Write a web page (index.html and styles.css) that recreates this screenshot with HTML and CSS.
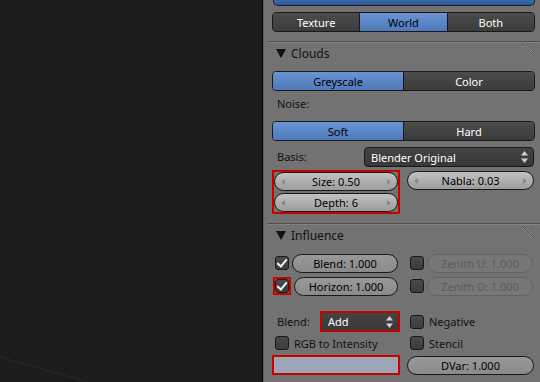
FILE: index.html
```html
<!DOCTYPE html>
<html>

<head>
    <title>Texture Properties</title>
    <link rel="stylesheet" href="styles.css">
</head>

<body>
    <div class="screen">
        <!-- 3D 视图区域 -->
        <div class="viewport">
            <svg viewBox="0 0 262 382" width="262" height="382">
                <line x1="0" y1="357" x2="92" y2="383" stroke="#2a2a2a" stroke-width="1" />
            </svg>
        </div>

        <!-- 属性面板 -->
        <div class="props">
            <div class="topbar"></div>

            <div class="seg mt6">
                <div class="tog">Texture</div>
                <div class="tog on">World</div>
                <div class="tog">Both</div>
            </div>

            <!-- Clouds -->
            <div class="sep mt9"></div>
            <div class="header">
                <svg class="tri" viewBox="0 0 10 9" width="10" height="9"><polygon points="0,0 10,0 5,9" fill="#111" /></svg>
                <span>Clouds</span>
                <svg class="hatch" viewBox="0 0 16 16" width="16" height="16">
                    <path d="M3 1 L15 13 M7 1 L15 9 M11 1 L15 5" stroke="#5a5a5a" stroke-width="1" />
                    <path d="M3 2 L14 13 M7 2 L14 9 M11 2 L14 5" stroke="#8a8a8a" stroke-width="1" />
                </svg>
            </div>

            <div class="seg mt7">
                <div class="tog on">Greyscale</div>
                <div class="tog">Color</div>
            </div>

            <div class="label mt3">Noise:</div>

            <div class="seg mt7">
                <div class="tog on">Soft</div>
                <div class="tog">Hard</div>
            </div>

            <div class="basis mt6">
                <div class="basis-label">Basis:</div>
                <div class="menu">
                    <span>Blender Original</span>
                    <svg viewBox="0 0 7 12" width="7" height="12"><polygon points="3.5,0 7,4.5 0,4.5" fill="#d0d0d0" /><polygon points="0,7.5 7,7.5 3.5,12" fill="#d0d0d0" /></svg>
                </div>
            </div>

            <div class="cols mt3">
                <div class="boxed">
                    <div class="slider"><i class="al"></i><span>Size: 0.50</span><i class="ar"></i></div>
                    <div class="slider"><i class="al"></i><span>Depth: 6</span><i class="ar"></i></div>
                </div>
                <div>
                    <div class="slider right"><i class="al"></i><span>Nabla: 0.03</span><i class="ar"></i></div>
                </div>
            </div>

            <!-- Influence -->
            <div class="sep mt9"></div>
            <div class="header">
                <svg class="tri" viewBox="0 0 10 9" width="10" height="9"><polygon points="0,0 10,0 5,9" fill="#111" /></svg>
                <span>Influence</span>
                <svg class="hatch" viewBox="0 0 16 16" width="16" height="16">
                    <path d="M3 1 L15 13 M7 1 L15 9 M11 1 L15 5" stroke="#5a5a5a" stroke-width="1" />
                    <path d="M3 2 L14 13 M7 2 L14 9 M11 2 L14 5" stroke="#8a8a8a" stroke-width="1" />
                </svg>
            </div>

            <div class="cols mt7">
                <div class="chk-row">
                    <div class="chk on"></div>
                    <div class="slider plain">Blend: 1.000</div>
                </div>
                <div class="chk-row">
                    <div class="chk"></div>
                    <div class="slider off">Zenith U: 1.000</div>
                </div>
            </div>
            <div class="cols mt3">
                <div class="chk-row">
                    <div class="hl"><div class="chk on"></div></div>
                    <div class="slider plain">Horizon: 1.000</div>
                </div>
                <div class="chk-row">
                    <div class="chk"></div>
                    <div class="slider off">Zenith D: 1.000</div>
                </div>
            </div>

            <div class="cols mt15">
                <div class="blend-row">
                    <div class="blend-label">Blend:</div>
                    <div class="menu boxed-menu">
                        <span>Add</span>
                        <svg viewBox="0 0 7 12" width="7" height="12"><polygon points="3.5,0 7,4.5 0,4.5" fill="#d0d0d0" /><polygon points="0,7.5 7,7.5 3.5,12" fill="#d0d0d0" /></svg>
                    </div>
                </div>
                <div class="opt">
                    <div class="chk"></div>
                    <span>Negative</span>
                </div>
            </div>
            <div class="cols mt3">
                <div class="opt">
                    <div class="chk"></div>
                    <span>RGB to Intensity</span>
                </div>
                <div class="opt">
                    <div class="chk"></div>
                    <span>Stencil</span>
                </div>
            </div>

            <div class="cols mt4">
                <div class="swatch"></div>
                <div>
                    <div class="slider plain right dvar">DVar: 1.000</div>
                </div>
            </div>
        </div>
    </div>
</body>

</html>
```

FILE: styles.css
```css
body {
    margin: 0;
    font-family: "Noto Sans", "DejaVu Sans", sans-serif;
    font-size: 11px;
    background-color: #1c1c1c;
}

.screen {
    display: flex;
    width: 540px;
    height: 382px;
    overflow: hidden;
}

.viewport {
    width: 262px;
    flex: none;
    background-color: #1c1c1c;
    border-right: 1px solid #080808;
}

.viewport svg {
    display: block;
}

.props {
    flex: 1;
    background-color: #727272;
    border-left: 1px solid #5e5e5e;
    padding: 0 5px 0 8px;
}

.topbar {
    height: 5px;
    margin-left: 1px;
    background: linear-gradient(#3a68ab, #2b5795);
    border: 1px solid #1b1b1b;
    border-top: none;
    border-radius: 0 0 5px 5px;
}

/* 切换按钮组 */
.seg {
    display: flex;
    height: 20px;
    box-sizing: border-box;
    border: 1px solid #191919;
    border-radius: 4px;
    overflow: hidden;
}

.tog {
    flex: 1;
    display: flex;
    align-items: center;
    justify-content: center;
    color: #ffffff;
    background: linear-gradient(#4c4c4c, #3b3b3b);
}

.tog + .tog {
    border-left: 1px solid #191919;
}

.tog.on {
    color: #000000;
    background: linear-gradient(#6a94d4, #4e7aba);
}

/* 分割线和面板标题 */
.sep {
    height: 1px;
    margin-left: -4px;
    margin-right: -5px;
    background-color: #4e4e4e;
    border-bottom: 1px solid #838383;
}

.header {
    display: flex;
    align-items: center;
    height: 21px;
    font-size: 12px;
    color: #111;
}

.header .tri {
    margin: 0 5px 0 4px;
}

.header .hatch {
    align-self: flex-start;
    margin: 0 0 0 auto;
}

.label {
    height: 20px;
    line-height: 20px;
    padding-left: 5px;
    color: #111;
}

.basis {
    display: flex;
    height: 20px;
}

.basis-label {
    width: 87px;
    padding-left: 5px;
    line-height: 20px;
    color: #111;
}

.menu {
    flex: 1;
    display: flex;
    align-items: center;
    justify-content: space-between;
    padding: 0 5px 0 6px;
    margin-right: 1px;
    box-sizing: border-box;
    color: #ffffff;
    background: linear-gradient(#444444, #383838);
    border: 1px solid #191919;
    border-radius: 4px;
}

.cols {
    display: grid;
    grid-template-columns: 1fr 1fr;
    column-gap: 7px;
}

/* 数值滑块 */
.boxed {
    display: flex;
    flex-direction: column;
    gap: 2px;
    border: 2px solid #c80000;
}

.slider {
    display: flex;
    align-items: center;
    justify-content: space-between;
    height: 19px;
    box-sizing: border-box;
    padding: 0 6px;
    color: #000;
    background: linear-gradient(#c2c2c2, #9c9c9c);
    border: 1px solid #191919;
    border-radius: 10px;
}

.slider.right {
    margin: 1px 1px 0 0;
}

.slider .al,
.slider .ar {
    width: 0;
    height: 0;
    border-top: 3px solid transparent;
    border-bottom: 3px solid transparent;
}

.slider .al {
    border-right: 4px solid #8a8a8a;
}

.slider .ar {
    border-left: 4px solid #8a8a8a;
}

.slider.plain {
    justify-content: center;
    background: linear-gradient(#999999, #8a8a8a);
}

.slider.off {
    justify-content: center;
    color: #5c5c5c;
    background: #777777;
    border-color: #636363;
}

.chk-row {
    display: flex;
    align-items: center;
    gap: 3px;
    height: 20px;
    padding: 0 2px 0 3px;
}

.chk-row .slider {
    flex: 1;
}

.chk {
    flex: none;
    width: 14px;
    height: 14px;
    box-sizing: border-box;
    background: linear-gradient(#4a4a4a, #3c3c3c);
    border: 1px solid #191919;
    border-radius: 3px;
    position: relative;
}

.chk.on::after {
    content: '';
    position: absolute;
    left: 3px;
    top: 0px;
    width: 4px;
    height: 8px;
    border-right: 2px solid #f0f0f0;
    border-bottom: 2px solid #f0f0f0;
    transform: rotate(40deg);
}

.hl {
    margin-left: -2px;
    border: 2px solid #c80000;
}

.blend-row {
    display: flex;
    height: 21px;
}

.blend-label {
    width: 43px;
    padding-left: 5px;
    line-height: 21px;
    color: #111;
}

.boxed-menu {
    margin-right: 0;
    border: 2px solid #c80000;
    border-radius: 0;
    background: linear-gradient(#444444, #383838);
}

.opt {
    display: flex;
    align-items: center;
    gap: 5px;
    padding-left: 3px;
    height: 21px;
    color: #111;
}

.cols.mt3 .opt {
    height: 16px;
}

.swatch {
    height: 20px;
    box-sizing: border-box;
    background-color: #9ba7b7;
    border: 2px solid #c80000;
}

.dvar {
    margin-top: 1px;
}

.mt3 { margin-top: 3px; }
.mt4 { margin-top: 4px; }
.mt6 { margin-top: 6px; }
.mt7 { margin-top: 7px; }
.mt9 { margin-top: 9px; }
.mt15 { margin-top: 15px; }
```
